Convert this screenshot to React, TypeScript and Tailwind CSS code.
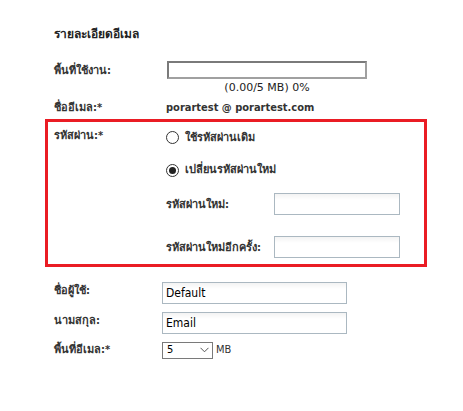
const font = { fontFamily: '"DejaVu Sans Condensed", "DejaVu Sans", Tahoma, sans-serif' };

const Label = ({ children }: { children: React.ReactNode }) => (
  <div className="w-[112px] shrink-0 text-[11px] font-bold text-[#333]">{children}</div>
);

const TextBox = ({ value = "", w }: { value?: string; w: string }) => (
  <div className={`${w} h-[22px] border border-[#abb8c1] bg-gradient-to-b from-[#f3f3f3] to-white to-[30%] pl-[3px] text-[12px] leading-[20px] text-black`}>
    {value}
  </div>
);

const Radio = ({ checked, label }: { checked?: boolean; label: string }) => (
  <div className="flex items-center">
    <span className="flex h-[13px] w-[13px] items-center justify-center rounded-full border border-[#333] bg-white">
      {checked && <span className="h-[7px] w-[7px] rounded-full bg-[#222]" />}
    </span>
    <span className="ml-[6px] text-[11px] font-bold text-[#333]">{label}</span>
  </div>
);

export default function App() {
  return (
    <div className="h-[411px] w-[463px] bg-white" style={font}>
      <div className="pl-[54px] pt-[25px]">
        <h2 className="text-[12px] font-bold text-[#222]">รายละเอียดอีเมล</h2>

        <div className="mt-[20px] flex">
          <Label>พื้นที่ใช้งาน:</Label>
          <div className="ml-[1px] mt-[-2px] flex flex-col items-center">
            <div className="h-[18px] w-[200px] border-2 border-[#7a7a7a] border-b-[#a0a0a0] border-r-[#a0a0a0] bg-white" />
            <div className="mt-[2px] font-['DejaVu_Sans'] text-[11px] leading-[14px] text-[#222]">(0.00/5 MB) 0%</div>
          </div>
        </div>

        <div className="mt-[5px] flex">
          <Label>ชื่ออีเมล:*</Label>
          <div className="text-[11px] font-bold text-[#333]">porartest @ porartest.com</div>
        </div>
      </div>

      <div className="ml-[45px] mt-[2px] h-[148px] w-[382px] border-[3px] border-[#ea1c24] pl-[6px] pt-[6px]">
        <div className="flex">
          <Label>รหัสผ่าน:*</Label>
          <div className="mt-[2px] flex flex-col">
            <Radio label="ใช้รหัสผ่านเดิม" />
            <div className="mt-[16px]">
              <Radio checked label="เปลี่ยนรหัสผ่านใหม่" />
            </div>
          </div>
        </div>
        <div className="ml-[112px] mt-[14px] flex">
          <div className="w-[108px] pt-[4px] text-[11px] font-bold text-[#333]">รหัสผ่านใหม่:</div>
          <TextBox w="w-[126px]" />
        </div>
        <div className="ml-[112px] mt-[21px] flex">
          <div className="w-[108px] pt-[4px] text-[11px] font-bold text-[#333]">รหัสผ่านใหม่อีกครั้ง:</div>
          <TextBox w="w-[126px]" />
        </div>
      </div>

      <div className="pl-[54px] pt-[15px]">
        <div className="flex">
          <div className="w-[108px] shrink-0 pt-[1px] text-[11px] font-bold text-[#333]">ชื่อผู้ใช้:</div>
          <TextBox value="Default" w="w-[185px]" />
        </div>
        <div className="mt-[8px] flex">
          <div className="w-[108px] shrink-0 pt-[1px] text-[11px] font-bold text-[#333]">นามสกุล:</div>
          <TextBox value="Email" w="w-[185px]" />
        </div>
        <div className="mt-[8px] flex">
          <div className="w-[108px] shrink-0 text-[11px] font-bold text-[#333]">พื้นที่อีเมล:*</div>
          <div className="flex items-center">
            <div className="flex h-[17px] w-[51px] items-center justify-between border border-[#7a7a7a] bg-white pl-[4px] pr-[3px] text-[11px] text-black">
              <span>5</span>
              <svg width="9" height="6" viewBox="0 0 9 6" fill="none">
                <path d="M0.5 0.8 L4.5 4.8 L8.5 0.8" stroke="#555" strokeWidth="1" />
              </svg>
            </div>
            <span className="ml-[3px] text-[11px] text-[#333]">MB</span>
          </div>
        </div>
      </div>
    </div>
  );
}
